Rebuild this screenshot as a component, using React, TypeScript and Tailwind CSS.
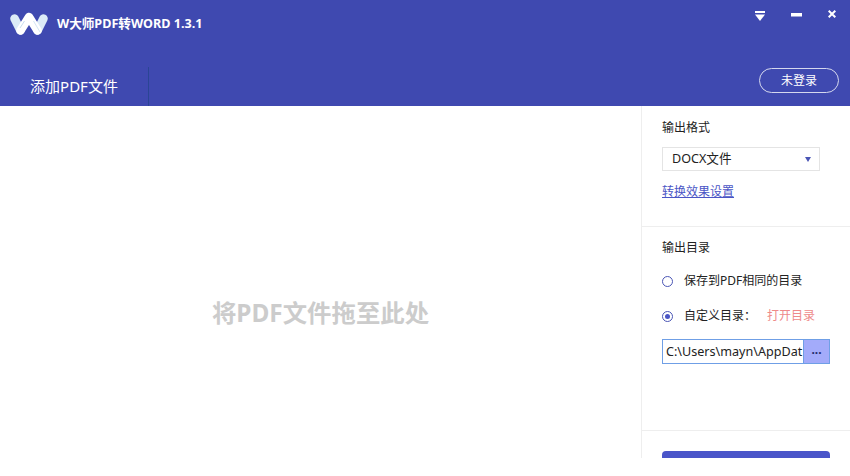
const font = "font-['Noto_Sans','Noto_Sans_CJK_SC',sans-serif]";

function Logo() {
  return (
    <svg width="40" height="24" viewBox="0 0 40 24" className="shrink-0">
      <g fill="none" strokeWidth="8.500" strokeLinecap="round" strokeLinejoin="round">
        <path d="M5.500 6.500L11.500 18.500" stroke="#dcebf7" />
        <path d="M34.500 6.500L28.500 18.500" stroke="#dcebf7" />
        <path d="M11.500 18.500L20 5L28.500 18.500" stroke="#ffffff" />
      </g>
      <path d="M15.500 9L11 16" stroke="#b9d4ea" strokeWidth="0.800" fill="none" />
      <path d="M24.500 9L31 20" stroke="#c9dff0" strokeWidth="0.800" fill="none" />
    </svg>
  );
}

function WindowButtons() {
  return (
    <div className="flex items-start gap-[26px] pt-[10px] pr-[14px]">
      <svg width="10" height="10" viewBox="0 0 10 10" className="mt-[1px]">
        <rect x="0" y="0" width="10" height="2" fill="#fff" />
        <path d="M0 3.500h10L5 10z" fill="#fff" />
      </svg>
      <svg width="11" height="4" viewBox="0 0 11 4" className="mt-[3px]">
        <rect x="0" y="0" width="11" height="3.500" fill="#fff" />
      </svg>
      <svg width="8" height="8" viewBox="0 0 8 8">
        <path d="M.7.7l6.600 6.600M7.300.7L.7 7.300" stroke="#fff" strokeWidth="2" />
      </svg>
    </div>
  );
}

function Radio({ checked }: { checked?: boolean }) {
  return (
    <span className="flex h-[11px] w-[11px] shrink-0 items-center justify-center rounded-full border border-[#4a55b5] bg-white">
      {checked && <span className="h-[5px] w-[5px] rounded-full bg-[#4a55c5]" />}
    </span>
  );
}

export default function App() {
  return (
    <div className={`${font} h-[476px] w-[850px] overflow-hidden bg-white`}>
      {/* Header */}
      <div className="flex h-[106px] flex-col bg-[#3f49b0] text-white">
        <div className="flex h-[67px] items-start justify-between">
          <div className="flex items-center gap-[8px] pt-[11px] pl-[9px]">
            <Logo />
            <span className="text-[12.600px] font-bold leading-[26px]">W大师PDF转WORD 1.3.1</span>
          </div>
          <WindowButtons />
        </div>
        <div className="flex flex-1 items-start justify-between">
          <div className="flex h-[39px] w-[149px] items-center justify-center border-r border-[#2a4595] text-[15px] leading-none">
            添加PDF文件
          </div>
          <div className="mr-[11px] mt-[1px] flex h-[25px] w-[80px] items-center justify-center rounded-full border border-[#d5d8ee] text-[12px] leading-none">
            未登录
          </div>
        </div>
      </div>

      <div className="flex h-[352px]">
        {/* Drop area */}
        <div className="flex flex-1 items-center justify-center">
          <span className="mt-[63px] text-[24.400px] font-bold leading-none text-[#cccccc]">将PDF文件拖至此处</span>
        </div>

        {/* Side panel */}
        <div className="flex w-[209px] flex-col border-l border-[#eeeeee] text-[12px] leading-none text-[#222222]">
          <div className="h-[121px] border-b border-[#eeeeee] px-[20px] pt-[16px]">
            <div className="leading-[12px]">输出格式</div>
            <div className="mt-[13px] flex h-[24px] w-[158px] items-center justify-between border border-[#e4e4e4] pl-[9px] pr-[8px]">
              <span className="text-[12.600px]">DOCX文件</span>
              <svg width="6" height="5" viewBox="0 0 6 5">
                <path d="M0 0h6L3 5z" fill="#4a55b5" />
              </svg>
            </div>
            <div className="mt-[15px] text-[#4a55c5] underline">转换效果设置</div>
          </div>

          <div className="h-[204px] border-b border-[#eeeeee] pl-[20px] pt-[15px]">
            <div className="leading-[12px]">输出目录</div>
            <div className="mt-[21px] flex items-center gap-[11px]">
              <Radio />
              <span>保存到PDF相同的目录</span>
            </div>
            <div className="mt-[23px] flex items-center gap-[11px]">
              <Radio checked />
              <span>自定义目录：</span>
              <span className="text-[#ee8a8a]">打开目录</span>
            </div>
            <div className="mt-[17px] flex h-[25px] w-[168px] items-center border border-[#6f9fe6]">
              <span className="w-[140px] whitespace-nowrap pl-[3px] text-[12.600px] leading-[23px]">C:\Users\mayn\AppDat</span>
              <span className="flex h-full flex-1 items-center justify-center border-l border-[#6f9fe6] bg-[#a3abfa] pb-[3px] font-bold text-[#1f2a6b]">...</span>
            </div>
          </div>

          <div className="pl-[20px] pt-[20px]">
            <div className="h-[7px] w-[168px] rounded-t-[4px] bg-[#4a55c9]" />
          </div>
        </div>
      </div>
    </div>
  );
}
